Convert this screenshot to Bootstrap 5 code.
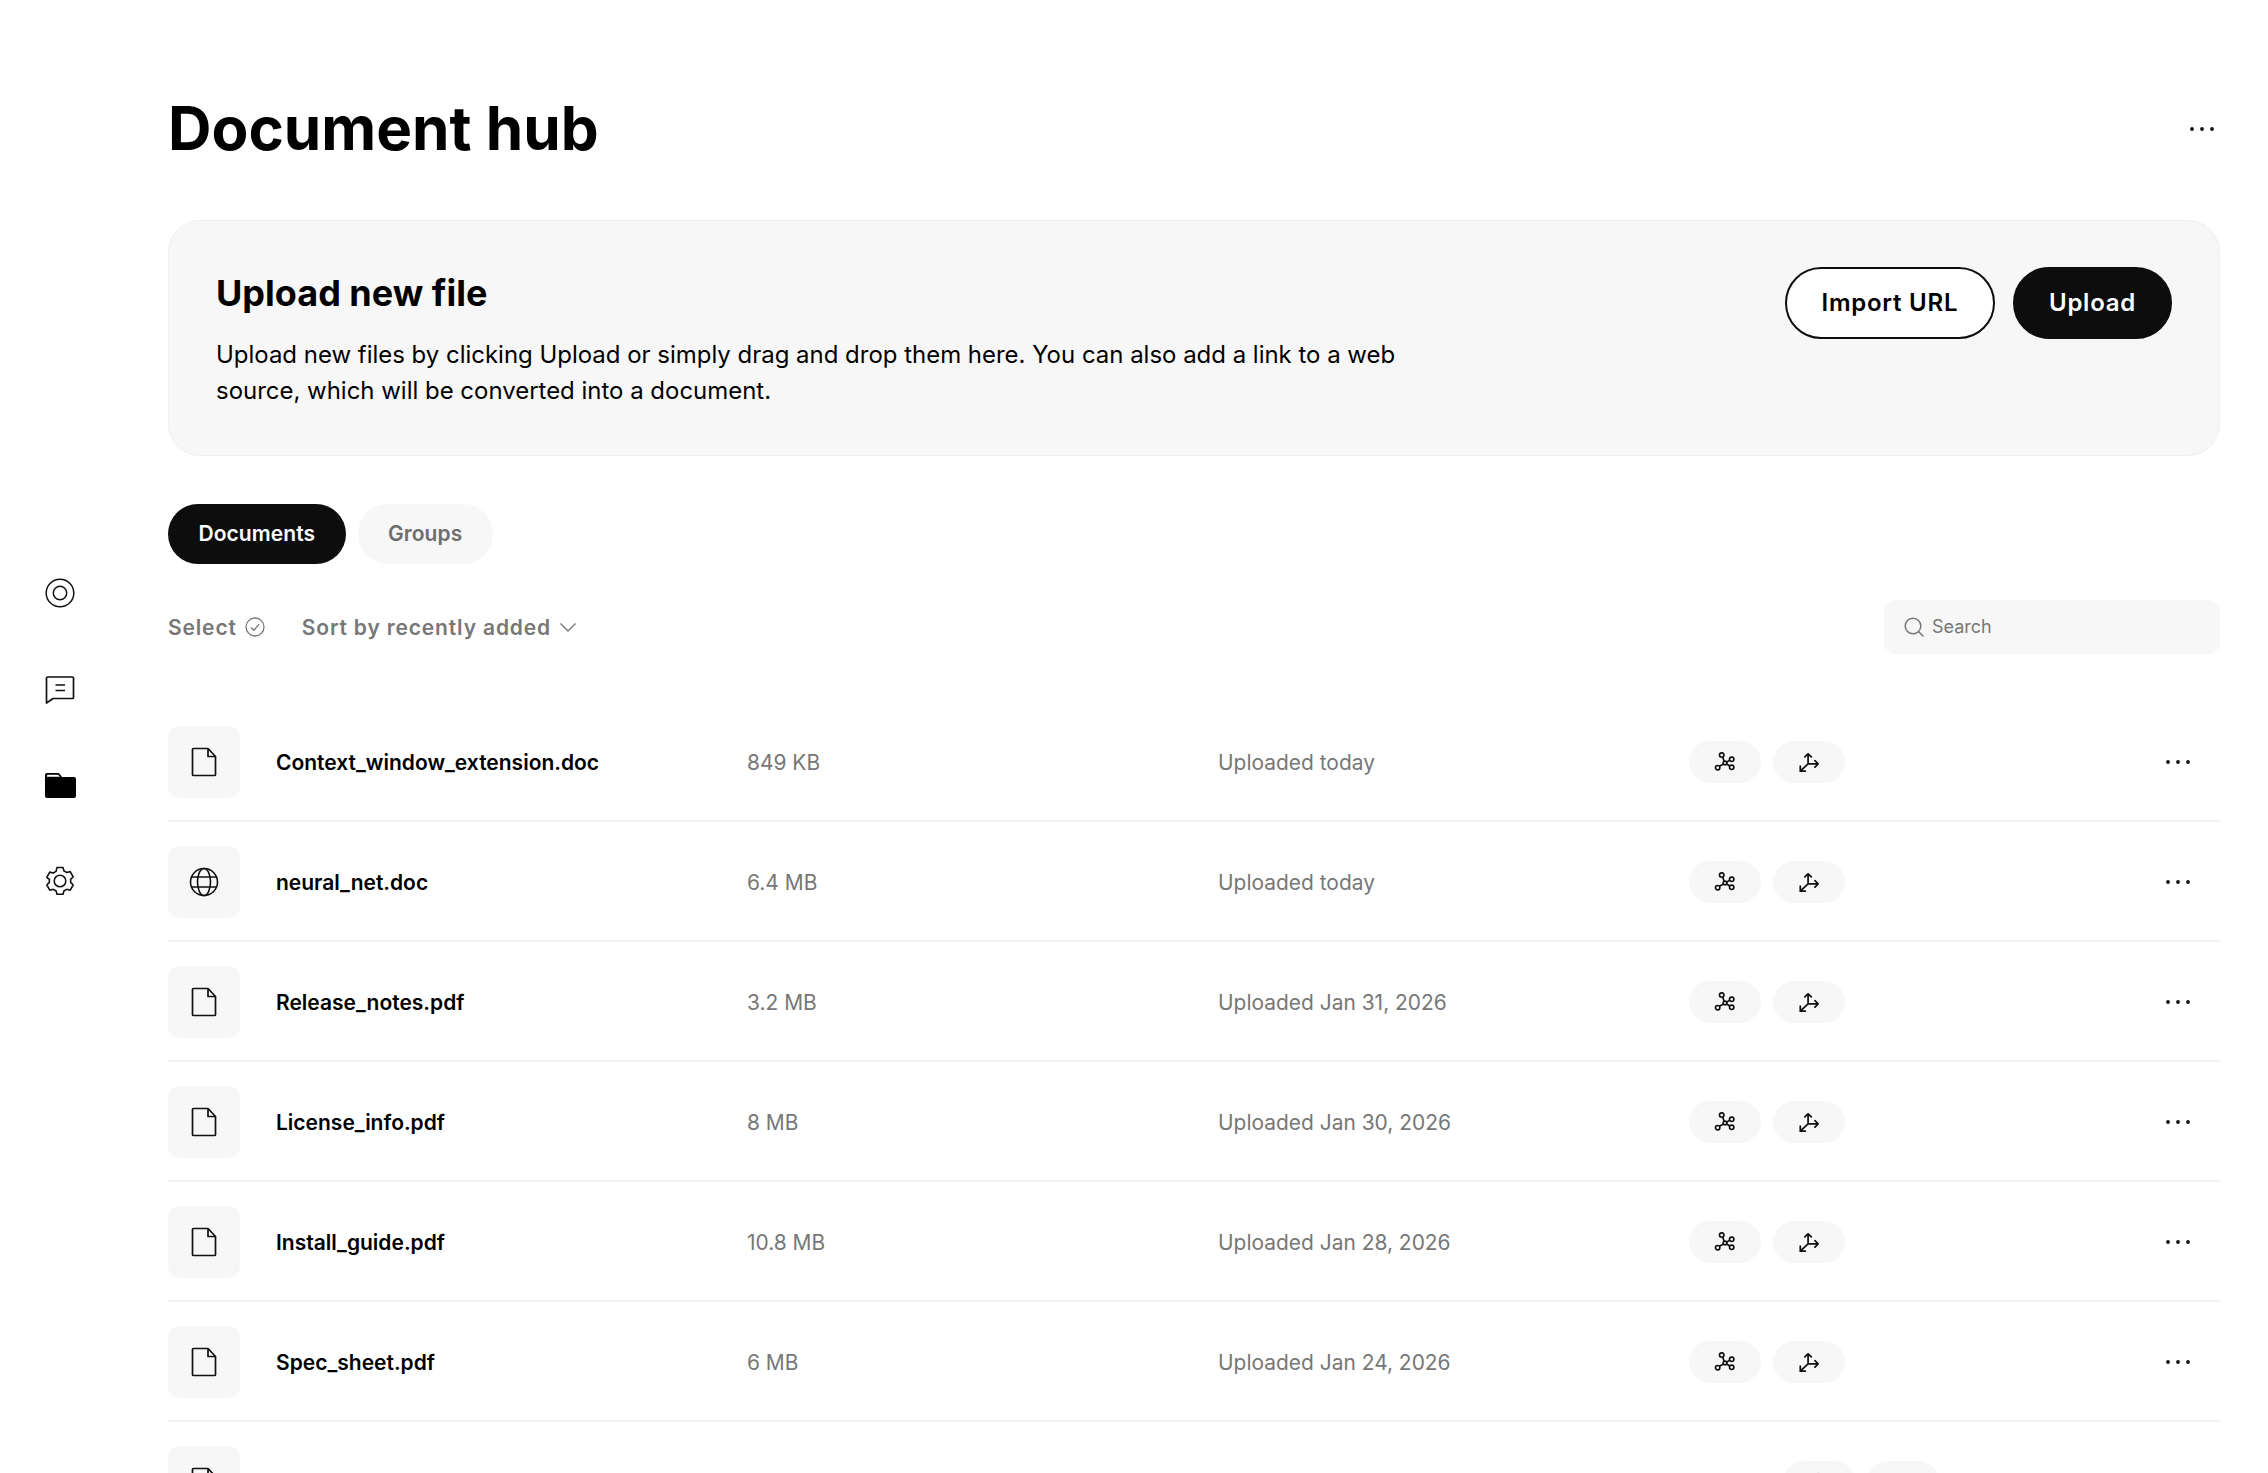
<!DOCTYPE html>
<html lang="en"><head><meta charset="utf-8"><title>Document hub</title>
<link href="https://cdn.jsdelivr.net/npm/bootstrap@5.3.0/dist/css/bootstrap.min.css" rel="stylesheet">
<style>
html,body{height:100%;overflow:hidden;background:#fff}
body{font-family:Inter,"Liberation Sans",sans-serif;color:#000}
.rail{width:168px;height:100vh;gap:64px;padding-right:48px}
.rail svg{width:32px;height:32px;display:block}
.mainpane{width:2052px;padding-top:89px}
.hub-title{font-size:60.2px;font-weight:700;line-height:80px;margin:0}
.more-top{margin-right:4px}
.upload-box{height:236px;margin-top:51px;padding:47px;background:#f7f7f7;border:1px solid #efefef;border-radius:32px}
.upload-box h2{font-size:36px;font-weight:700;line-height:40px;margin:5px 0 0}
.upload-box p{font-size:23.96px;line-height:36px;margin:24px 0 0;width:1240px}
.btn-pair{gap:18px;margin-top:-1px}
.pill-btn{height:72px;border-radius:36px;font-size:24px;font-weight:600;padding:0 34px;letter-spacing:.75px;display:flex;align-items:center}
.pill-out{background:#fff;border:2px solid #0d0d0d;color:#000;padding:0 34.75px}
.pill-fill{background:#0d0d0d;border:2px solid #0d0d0d;color:#fff}
.tabs-row{margin-top:48px;gap:12px}
.tab-pill{height:60px;border-radius:30px;font-size:21px;font-weight:600;padding:0 30.5px;letter-spacing:.06px;display:flex;align-items:center}
.tab-on{background:#0d0d0d;color:#fff}
.tab-off{background:#f7f7f7;color:#6e6e6e}
.tools-row{margin-top:36px;height:54px}
.tool-txt{font-size:21px;font-weight:600;color:#777;letter-spacing:.85px;padding-top:1px}
.gap-sort{margin-left:37px}
.searchbox{width:336px;height:54px;background:#f7f7f7;border-radius:12px;padding-left:20px;color:#777;font-size:18px;gap:8px}
.search-word{margin-top:-1px}
.doc-list{margin-top:48px}
.doc-row{display:grid;grid-template-columns:108px 471px 471px 471px 1fr;align-items:center;height:120px;padding-top:2px;border-bottom:2px solid #f3f3f3}
.file-tile{width:72px;height:72px;background:#f7f7f7;border-radius:12px}
.doc-name{font-size:21px;font-weight:600;color:#000;padding-top:1px}
.doc-meta{font-size:20.95px;color:#777;padding-top:1px}
.chip{width:72px;height:42px;background:#f7f7f7;border-radius:21px}
.chip-row{gap:12px}
.chip-shift{margin-left:94px}
.more-row{margin-right:28px}
</style></head><body>
<svg width="0" height="0" class="position-absolute"><defs>
<symbol id="i-file" viewBox="0 0 32 32"><path d="M4.500 3.500a1 1 0 0 1 1-1H20l7.500 8v18a1 1 0 0 1-1 1H5.500a1 1 0 0 1-1-1z M20 2.500V10.500h7.500" fill="none" stroke="#111" stroke-width="1.700" stroke-linejoin="round"/></symbol>
<symbol id="i-globe" viewBox="0 0 32 32"><g fill="none" stroke="#111" stroke-width="1.600"><circle cx="16" cy="16" r="13.500"/><ellipse cx="16" cy="16" rx="6.500" ry="13.500"/><path d="M4 11h24M4 21h24"/></g></symbol>
<symbol id="i-dots" viewBox="0 0 28 8"><circle cx="4" cy="4" r="1.900" fill="#111"/><circle cx="14" cy="4" r="1.900" fill="#111"/><circle cx="24" cy="4" r="1.900" fill="#111"/></symbol>
<symbol id="i-graph" viewBox="0 0 24 24"><g fill="none" stroke="#111" stroke-width="1.800"><circle cx="8.400" cy="4.400" r="2.400"/><circle cx="19.300" cy="9" r="2.400"/><circle cx="19.300" cy="17.800" r="2.400"/><circle cx="4" cy="18.200" r="2.400"/><circle cx="12" cy="13" r="2"/><path d="M9.400 6.600l1.700 4.500M17.100 10l-3.300 2.300M17.400 16.400l-3.700-2.300M5.800 16.600l4.700-2.300"/></g></symbol>
<symbol id="i-axes" viewBox="0 0 24 24"><g fill="none" stroke="#111" stroke-width="1.900" stroke-linejoin="round" stroke-linecap="round"><path d="M11 14V3M7.500 6.500L11 3l3.500 3.500M11 14h11M18.500 10.500L22 14l-3.500 3.500M11 14L2.500 22M2.500 16.500V22H8"/></g></symbol>
</defs></svg>
<div class="d-flex">
<nav class="rail d-flex flex-column align-items-center justify-content-center flex-shrink-0">
<svg viewBox="0 0 32 32" fill="none" stroke="#111" stroke-width="1.500"><circle cx="16" cy="16" r="13.800"/><circle cx="16" cy="16" r="6.700"/></svg>
<svg viewBox="0 0 32 32" fill="none" stroke="#111" stroke-width="1.700" stroke-linejoin="round"><path d="M2.500 5a1 1 0 0 1 1-1h25a1 1 0 0 1 1 1v19.500a1 1 0 0 1-1 1H9L2.500 30z"/><path d="M11.500 12h9.500M11.500 17.500h9.500"/></svg>
<svg viewBox="0 0 32 32"><path fill="#000" d="M1 6a2 2 0 0 1 2-2h10.500c1 0 1.700.4 2.300 1.100L18 8h12a2 2 0 0 1 2 2v17a2 2 0 0 1-2 2H3a2 2 0 0 1-2-2z"/><path fill="#fff" d="M3 7.800V6.800a1 1 0 0 1 1-1h9.500c.7 0 1 .3 1.400.8l1 1.200z"/></svg>
<svg viewBox="0 0 32 32" fill="none" stroke="#111" stroke-width="1.600" stroke-linejoin="round"><circle cx="16" cy="16" r="5.800"/><path d="M13 2.500h6l1 3.500c1 .4 1.800.9 2.600 1.500l3.600-.9 3 5.200-2.600 2.600c.1 1 .1 2 0 3l2.600 2.600-3 5.200-3.600-.9c-.8.6-1.600 1.100-2.600 1.500l-1 3.500h-6l-1-3.500c-1-.4-1.800-.9-2.600-1.500l-3.600.9-3-5.200 2.600-2.600c-.1-1-.1-2 0-3L2.800 12.300l3-5.200 3.600.9c.8-.6 1.600-1.100 2.600-1.500z"/></svg>
</nav>
<main class="mainpane flex-shrink-0">
<div class="d-flex justify-content-between align-items-center"><h1 class="hub-title">Document hub</h1><svg class="more-top" width="28" height="8"><use href="#i-dots"/></svg></div>
<section class="upload-box d-flex justify-content-between align-items-start">
<div><h2>Upload new file</h2><p>Upload new files by clicking Upload or simply drag and drop them here. You can also add a link to a web source, which will be converted into a document.</p></div>
<div class="btn-pair d-flex"><button class="pill-btn pill-out">Import URL</button><button class="pill-btn pill-fill">Upload</button></div>
</section>
<div class="tabs-row d-flex"><div class="tab-pill tab-on">Documents</div><div class="tab-pill tab-off">Groups</div></div>
<div class="tools-row d-flex align-items-center justify-content-between">
<div class="d-flex align-items-center"><span class="tool-txt">Select</span>
<svg class="ms-2" width="20" height="20" viewBox="0 0 20 20" fill="none" stroke="#777" stroke-width="1.300"><circle cx="10" cy="10" r="9"/><path d="M6 10.500l3 2.700 5-6"/></svg>
<span class="tool-txt gap-sort">Sort by recently added</span>
<svg class="ms-2" width="18" height="12" viewBox="0 0 18 12" fill="none" stroke="#777" stroke-width="1.400"><path d="M1.500 2.500L9 10l7.500-7.500"/></svg></div>
<div class="searchbox d-flex align-items-center"><svg width="20" height="20" viewBox="0 0 20 20" fill="none" stroke="#777" stroke-width="1.500"><circle cx="9" cy="9" r="7.800"/><path d="M14.500 14.500l5 5"/></svg><span class="search-word">Search</span></div>
</div>
<div class="doc-list" id="rows"></div>
</main></div>
<script>
const rows=[["i-file","Context_window_extension.doc","849 KB","Uploaded today"],["i-globe","neural_net.doc","6.4 MB","Uploaded today"],["i-file","Release_notes.pdf","3.2 MB","Uploaded Jan 31, 2026"],["i-file","License_info.pdf","8 MB","Uploaded Jan 30, 2026"],["i-file","Install_guide.pdf","10.8 MB","Uploaded Jan 28, 2026"],["i-file","Spec_sheet.pdf","6 MB","Uploaded Jan 24, 2026"]];
const tile=i=>`<div class="file-tile d-flex align-items-center justify-content-center"><svg width="32" height="32"><use href="#${i}"/></svg></div>`;
const chip=(i,s)=>`<div class="chip d-flex align-items-center justify-content-center"><svg width="${s}" height="${s}"><use href="#${i}"/></svg></div>`;
const more=`<svg class="more-row" width="28" height="8"><use href="#i-dots"/></svg>`;
document.getElementById('rows').innerHTML=rows.map(r=>`<div class="doc-row">${tile(r[0])}<div class="doc-name">${r[1]}</div><div class="doc-meta">${r[2]}</div><div class="doc-meta">${r[3]}</div><div class="d-flex justify-content-between align-items-center"><div class="d-flex chip-row">${chip('i-graph',22)}${chip('i-axes',22)}</div>${more}</div></div>`).join('')+`<div class="doc-row">${tile('i-file')}<div></div><div></div><div></div><div class="d-flex justify-content-between align-items-center"><div class="d-flex chip-row chip-shift">${chip('i-axes',22)}${chip('i-graph',16)}</div>${more}</div></div>`;
</script>
<script src="https://cdn.jsdelivr.net/npm/bootstrap@5.3.0/dist/js/bootstrap.bundle.min.js"></script>
</body></html>
